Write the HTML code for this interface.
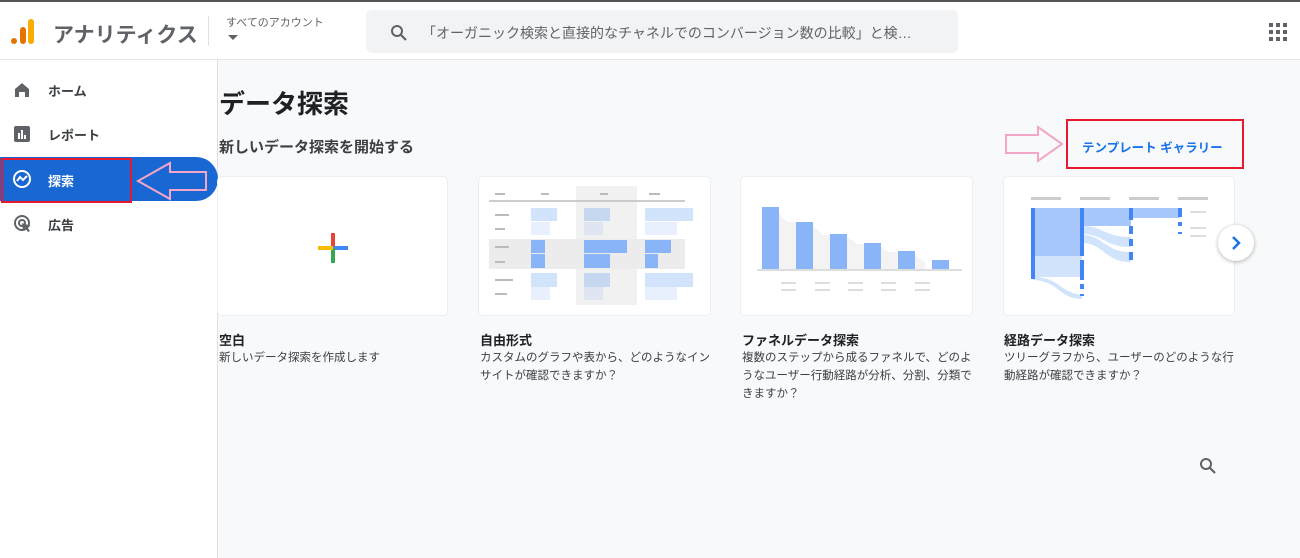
<!DOCTYPE html>
<html><head><meta charset="utf-8"><style>
*{margin:0;padding:0;box-sizing:border-box}
body{width:1300px;height:558px;overflow:hidden;background:#f8f9fa;font-family:"Liberation Sans","Noto Sans CJK JP",sans-serif;position:relative;color:#202124}
.top{position:absolute;left:0;top:0;width:1300px;height:60px;background:#fff;border-top:2px solid #555;border-bottom:1px solid #e6e6e6}
.side{position:absolute;left:0;top:60px;width:218px;height:498px;background:#fff;border-right:1px solid #e0e0e0}
.abs{position:absolute}
.nav{position:absolute;left:48px;font-size:13px;font-weight:bold;color:#3c4043}
.card{position:absolute;top:177px;height:138px;background:#fff;border-radius:4px;box-shadow:0 0 0 1px #eceff1}
.ct{position:absolute;top:330px;font-size:13px;font-weight:bold}
.cd{position:absolute;top:349px;font-size:11.5px;line-height:18px;color:#3c4043}
</style></head><body>
<div class="top">
 <svg class="abs" style="left:10px;top:15px" width="26" height="28"><circle cx="4" cy="24" r="3" fill="#e37400"/><rect x="10" y="10" width="6" height="17" rx="3" fill="#e37400"/><rect x="18" y="2" width="6" height="25" rx="3" fill="#f9ab00"/></svg>
 <div class="abs" style="left:53px;top:17px;font-size:21px;color:#5f6368;font-weight:bold">アナリティクス</div>
 <div class="abs" style="left:208px;top:14px;width:1px;height:30px;background:#e0e0e0"></div>
 <div class="abs" style="left:226px;top:12px;font-size:11px;color:#5f6368">すべてのアカウント</div>
 <svg class="abs" style="left:228px;top:33px" width="10" height="6"><path d="M0 0L10 0L5 5Z" fill="#5f6368"/></svg>
 <div class="abs" style="left:366px;top:8px;width:592px;height:43px;background:#f1f3f4;border-radius:6px"></div>
 <svg class="abs" style="left:390px;top:22px" width="18" height="18"><circle cx="7" cy="7" r="5" fill="none" stroke="#5f6368" stroke-width="2"/><path d="M11 11L16 16" stroke="#5f6368" stroke-width="2.2"/></svg>
 <div class="abs" style="left:422px;top:21px;font-size:14px;color:#5f6368">「オーガニック検索と直接的なチャネルでのコンバージョン数の比較」と検…</div>
 <svg class="abs" style="left:1269px;top:21px" width="18" height="18" fill="#5f6368"><rect x="0" y="0" width="4" height="4"/><rect x="7" y="0" width="4" height="4"/><rect x="14" y="0" width="4" height="4"/><rect x="0" y="7" width="4" height="4"/><rect x="7" y="7" width="4" height="4"/><rect x="14" y="7" width="4" height="4"/><rect x="0" y="14" width="4" height="4"/><rect x="7" y="14" width="4" height="4"/><rect x="14" y="14" width="4" height="4"/></svg>
</div>
<div class="side"></div>
<svg class="abs" style="left:14px;top:82px" width="16" height="16"><path d="M1 7L8 1L15 7V15H11V10H5V15H1Z" fill="#5f6368"/></svg>
<div class="nav" style="top:81px">ホーム</div>
<svg class="abs" style="left:14px;top:126px" width="16" height="16"><rect width="16" height="16" rx="2" fill="#5f6368"/><rect x="4" y="7" width="2" height="6" fill="#fff"/><rect x="7" y="4" width="2" height="9" fill="#fff"/><rect x="10" y="9" width="2" height="4" fill="#fff"/></svg>
<div class="nav" style="top:125px">レポート</div>
<div class="abs" style="left:0;top:157px;width:218px;height:44px;background:#1967d2;border-radius:0 22px 22px 0"></div>
<div class="abs" style="left:1px;top:158px;width:131px;height:45px;border:2px solid #e8192c"></div>
<svg class="abs" style="left:12px;top:169px" width="20" height="20"><circle cx="10" cy="10" r="8" fill="none" stroke="#fff" stroke-width="2"/><path d="M5 12L8 8L11 11L15 7" fill="none" stroke="#fff" stroke-width="2"/></svg>
<div class="nav" style="top:171px;color:#fff">探索</div>
<svg class="abs" style="left:136px;top:160px" width="72" height="42"><path d="M2 21L34 3V12H70V30H34V39Z" fill="none" stroke="#f4a6c8" stroke-width="2"/></svg>
<svg class="abs" style="left:13px;top:214px" width="20" height="20"><circle cx="9" cy="9" r="7" fill="none" stroke="#5f6368" stroke-width="2"/><circle cx="9" cy="9" r="3" fill="none" stroke="#5f6368" stroke-width="2"/><path d="M9 9L18 12L14 13L17 17L15 18L12 14L10 17Z" fill="#5f6368"/></svg>
<div class="nav" style="top:215px">広告</div>

<div class="abs" style="left:219px;top:84px;font-size:26px;font-weight:bold">データ探索</div>
<div class="abs" style="left:219px;top:136px;font-size:15px;font-weight:bold;color:#3c4043">新しいデータ探索を開始する</div>
<svg class="abs" style="left:1004px;top:125px" width="60" height="38"><path d="M2 10H34V2L58 19L34 36V28H2Z" fill="none" stroke="#f4a6c8" stroke-width="2"/></svg>
<div class="abs" style="left:1066px;top:119px;width:178px;height:50px;border:2px solid #e8192c"></div>
<div class="abs" style="left:1082px;top:137px;font-size:12.5px;font-weight:bold;color:#1a73e8">テンプレート ギャラリー</div>

<div class="card" style="left:218px;width:229px"><svg class="abs" style="left:100px;top:56px" width="30" height="30"><rect x="13" y="0" width="4" height="15" fill="#ea4335"/><rect x="15" y="13" width="15" height="4" fill="#4285f4"/><rect x="13" y="15" width="4" height="15" fill="#34a853"/><rect x="0" y="13" width="15" height="4" fill="#fbbc04"/></svg></div>
<div class="card" style="left:479px;width:231px">
<svg width="231" height="138"><rect x="97" y="9" width="61" height="119" fill="#f1f1f1"/><rect x="10" y="62" width="196" height="30" fill="#ececec"/><rect x="10" y="23" width="196" height="2" fill="#ccc"/>
<g fill="#bbb"><rect x="16" y="16" width="10" height="2"/><rect x="62" y="16" width="8" height="2"/><rect x="121" y="16" width="8" height="2"/><rect x="170" y="16" width="11" height="2"/><rect x="16" y="37" width="14" height="2"/><rect x="16" y="51" width="10" height="2"/><rect x="16" y="102" width="18" height="2"/><rect x="16" y="116" width="12" height="2"/><rect x="16" y="69" width="14" height="2"/><rect x="16" y="84" width="10" height="2"/></g>
<g fill="#d2e3fc"><rect x="52" y="31" width="26" height="13"/><rect x="166" y="31" width="48" height="13"/><rect x="52" y="96" width="26" height="14"/><rect x="166" y="96" width="48" height="14"/></g>
<g fill="#c6d7f0"><rect x="105" y="31" width="26" height="13"/><rect x="105" y="96" width="26" height="14"/></g>
<g fill="#e8f0fe"><rect x="52" y="45" width="19" height="13"/><rect x="166" y="45" width="32" height="13"/><rect x="52" y="110" width="19" height="13"/><rect x="166" y="110" width="32" height="13"/><rect x="105" y="45" width="19" height="13" fill="#dfe6f2"/><rect x="105" y="110" width="19" height="13" fill="#dfe6f2"/></g>
<g fill="#8ab4f8"><rect x="52" y="63" width="14" height="13"/><rect x="52" y="77" width="14" height="14"/><rect x="105" y="63" width="43" height="13"/><rect x="105" y="77" width="26" height="14"/><rect x="166" y="63" width="26" height="13"/><rect x="166" y="77" width="13" height="14"/></g></svg></div>
<div class="card" style="left:741px;width:231px">
<svg width="231" height="138"><path d="M21 30H32L46 45H68L82 58H103L117 67H135L148 75H169L184 85V94H21Z" fill="#f3f3f3"/><g fill="#8ab4f8"><rect x="21" y="30" width="17" height="62"/><rect x="55" y="45" width="17" height="47"/><rect x="89" y="57" width="17" height="35"/><rect x="123" y="66" width="17" height="26"/><rect x="157" y="74" width="17" height="18"/><rect x="191" y="83" width="17" height="9"/></g><rect x="16" y="92" width="205" height="2" fill="#ddd"/><g fill="#ddd"><rect x="40" y="105" width="15" height="2"/><rect x="74" y="105" width="15" height="2"/><rect x="107" y="105" width="15" height="2"/><rect x="140" y="105" width="15" height="2"/><rect x="174" y="105" width="15" height="2"/><rect x="40" y="112" width="15" height="2"/><rect x="74" y="112" width="15" height="2"/><rect x="107" y="112" width="15" height="2"/><rect x="140" y="112" width="15" height="2"/><rect x="174" y="112" width="15" height="2"/></g></svg></div>
<div class="card" style="left:1004px;width:230px">
<svg width="230" height="138"><g fill="#ccc"><rect x="27" y="20" width="30" height="3"/><rect x="76" y="20" width="30" height="3"/><rect x="125" y="20" width="30" height="3"/><rect x="174" y="20" width="30" height="3"/><rect x="186" y="34" width="16" height="2" fill="#ddd"/><rect x="186" y="50" width="16" height="2" fill="#ddd"/><rect x="186" y="58" width="16" height="2" fill="#ddd"/></g>
<rect x="29" y="31" width="49" height="48" fill="#a8c7fa"/><rect x="78" y="31" width="49" height="18" fill="#a8c7fa"/><rect x="127" y="31" width="49" height="10" fill="#a8c7fa"/>
<path d="M29 79H78V100H29Z M78 49C100 49 100 60 127 60V70C100 70 100 57 78 57Z M78 58C100 58 100 75 127 75V85C100 85 100 66 78 66Z M29 100C55 100 55 115 78 118V122C55 122 55 104 29 103Z" fill="#d2e3fc"/>
<g fill="#4285f4"><rect x="27" y="31" width="4" height="71"/><rect x="76" y="31" width="4" height="48"/><rect x="76" y="83" width="4" height="20"/><rect x="76" y="107" width="4" height="5"/><rect x="76" y="117" width="4" height="2"/><rect x="125" y="31" width="4" height="12"/><rect x="125" y="49" width="4" height="8"/><rect x="125" y="62" width="4" height="7"/><rect x="125" y="75" width="4" height="8"/><rect x="174" y="31" width="4" height="9"/><rect x="174" y="45" width="4" height="4"/><rect x="174" y="55" width="4" height="2"/></g></svg></div>
<div class="abs" style="left:1218px;top:225px;width:36px;height:36px;border-radius:50%;background:#fff;box-shadow:0 1px 4px rgba(0,0,0,.3)"><svg class="abs" style="left:12px;top:10px" width="12" height="16"><path d="M3 2L9 8L3 14" fill="none" stroke="#1a73e8" stroke-width="2.5"/></svg></div>

<div class="ct" style="left:219px">空白</div>
<div class="cd" style="left:219px">新しいデータ探索を作成します</div>
<div class="ct" style="left:480px">自由形式</div>
<div class="cd" style="left:480px;width:230px">カスタムのグラフや表から、どのようなインサイトが確認できますか？</div>
<div class="ct" style="left:742px">ファネルデータ探索</div>
<div class="cd" style="left:742px;width:232px">複数のステップから成るファネルで、どのようなユーザー行動経路が分析、分割、分類できますか？</div>
<div class="ct" style="left:1004px">経路データ探索</div>
<div class="cd" style="left:1004px;width:232px">ツリーグラフから、ユーザーのどのような行動経路が確認できますか？</div>
<svg class="abs" style="left:1199px;top:457px" width="18" height="18"><circle cx="7" cy="7" r="5" fill="none" stroke="#5f6368" stroke-width="2"/><path d="M11 11L16 16" stroke="#5f6368" stroke-width="2.2"/></svg>
</body></html>
